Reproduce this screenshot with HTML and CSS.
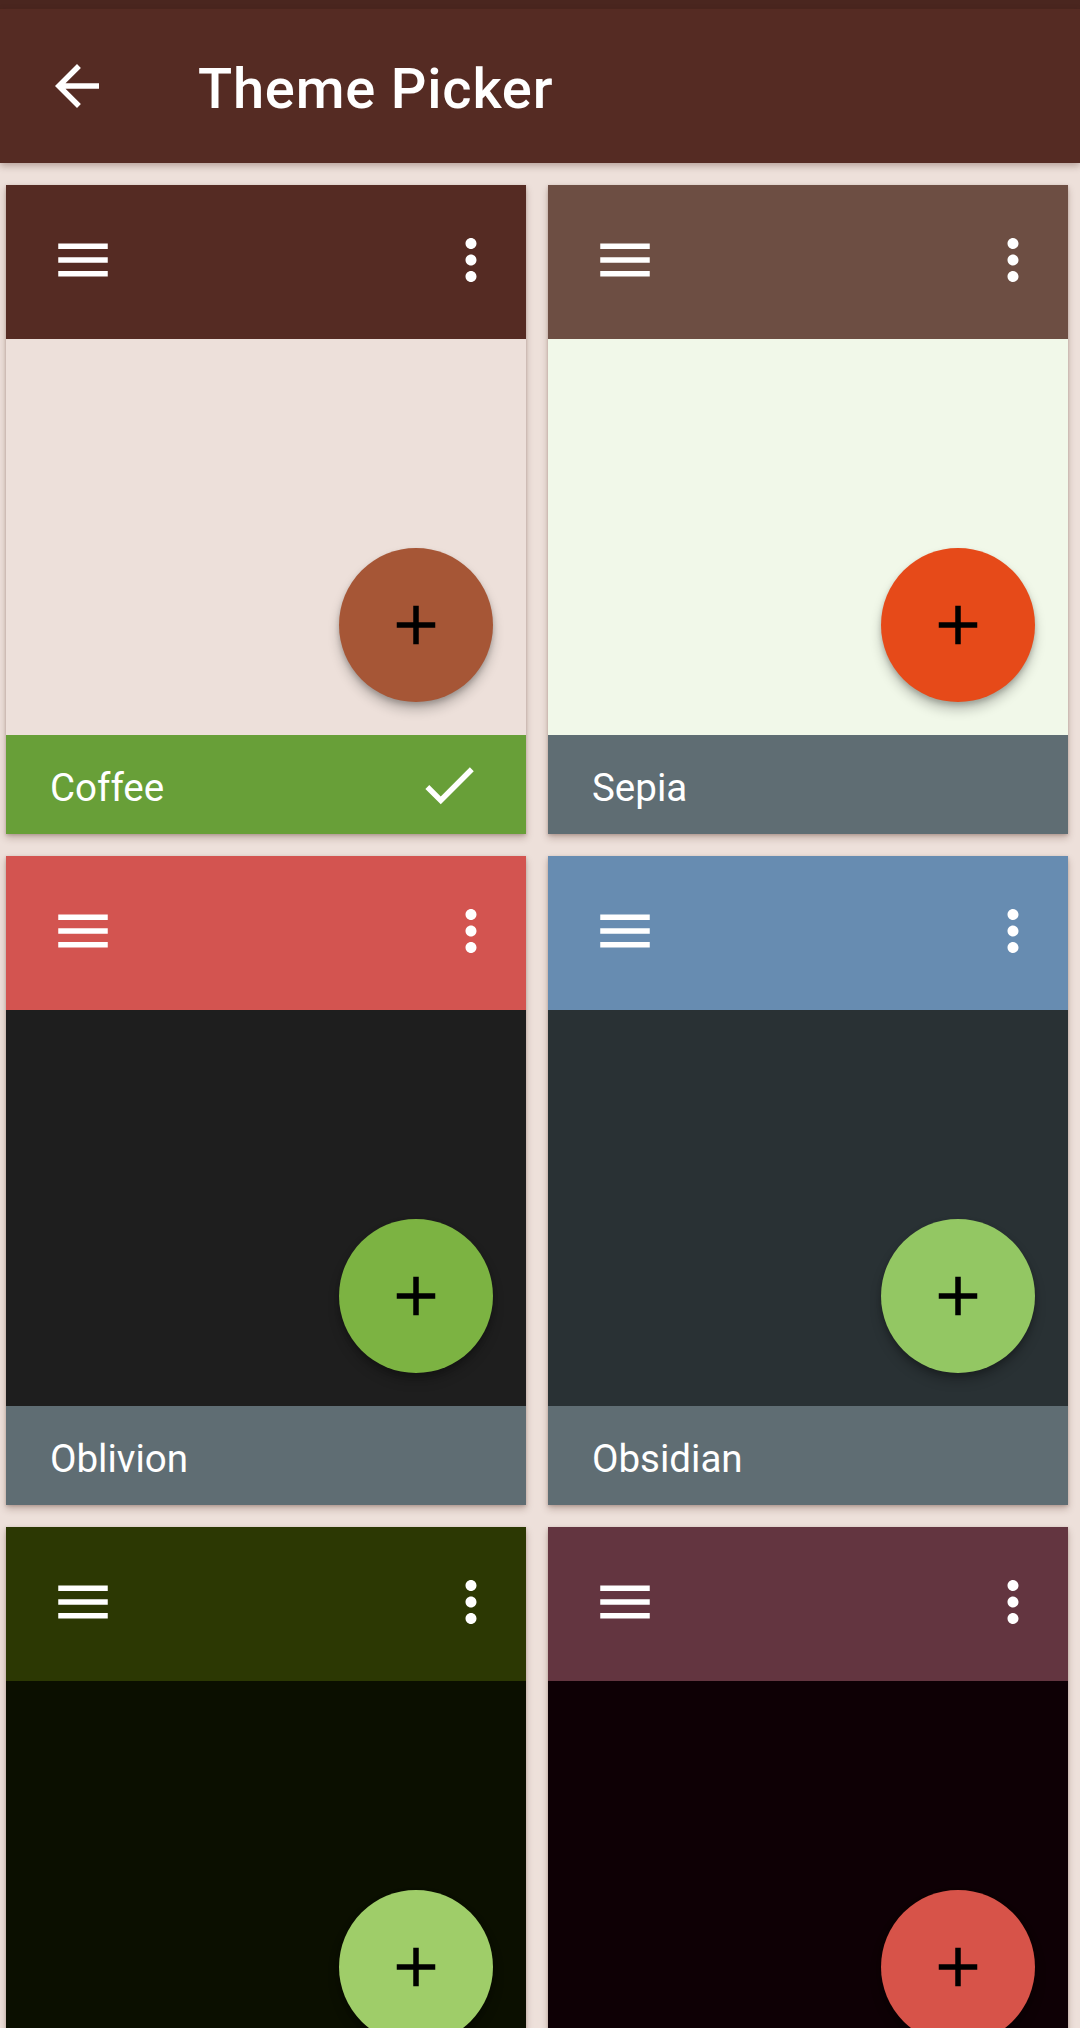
FILE: index.html
```html
<!DOCTYPE html>
<html lang="en">
<head>
<meta charset="utf-8">
<title>Theme Picker</title>
<link rel="stylesheet" href="styles.css">
</head>
<body>
<div class="statusbar"></div>
<header class="appbar">
  <svg class="back" viewBox="0 0 24 24"><path d="M20 11H7.83l5.59-5.59L12 4l-8 8 8 8 1.41-1.41L7.83 13H20v-2z"/></svg>
  <h1 class="title">Theme Picker</h1>
</header>
<main class="grid">
  <div class="card t-coffee">
    <div class="bar"><svg class="ico" viewBox="0 0 24 24"><path d="M3 18h18v-2H3v2zm0-5h18v-2H3v2zm0-7v2h18V6H3z"/></svg><svg class="ico more" viewBox="0 0 24 24"><path d="M12 8c1.1 0 2-.9 2-2s-.9-2-2-2-2 .9-2 2 .9 2 2 2zm0 2c-1.1 0-2 .9-2 2s.9 2 2 2 2-.9 2-2-.9-2-2-2zm0 6c-1.1 0-2 .9-2 2s.9 2 2 2 2-.9 2-2-.9-2-2-2z"/></svg></div>
    <div class="content"><div class="fab"><svg viewBox="0 0 24 24"><path d="M19 13h-6v6h-2v-6H5v-2h6V5h2v6h6v2z"/></svg></div></div>
    <div class="label selected"><span>Coffee</span><svg class="ico" viewBox="0 0 24 24"><path d="M9 16.17L4.83 12l-1.42 1.41L9 19 21 7l-1.41-1.41z"/></svg></div>
  </div>
  <div class="card t-sepia">
    <div class="bar"><svg class="ico" viewBox="0 0 24 24"><path d="M3 18h18v-2H3v2zm0-5h18v-2H3v2zm0-7v2h18V6H3z"/></svg><svg class="ico more" viewBox="0 0 24 24"><path d="M12 8c1.1 0 2-.9 2-2s-.9-2-2-2-2 .9-2 2 .9 2 2 2zm0 2c-1.1 0-2 .9-2 2s.9 2 2 2 2-.9 2-2-.9-2-2-2zm0 6c-1.1 0-2 .9-2 2s.9 2 2 2 2-.9 2-2-.9-2-2-2z"/></svg></div>
    <div class="content"><div class="fab"><svg viewBox="0 0 24 24"><path d="M19 13h-6v6h-2v-6H5v-2h6V5h2v6h6v2z"/></svg></div></div>
    <div class="label"><span>Sepia</span></div>
  </div>
  <div class="card t-oblivion">
    <div class="bar"><svg class="ico" viewBox="0 0 24 24"><path d="M3 18h18v-2H3v2zm0-5h18v-2H3v2zm0-7v2h18V6H3z"/></svg><svg class="ico more" viewBox="0 0 24 24"><path d="M12 8c1.1 0 2-.9 2-2s-.9-2-2-2-2 .9-2 2 .9 2 2 2zm0 2c-1.1 0-2 .9-2 2s.9 2 2 2 2-.9 2-2-.9-2-2-2zm0 6c-1.1 0-2 .9-2 2s.9 2 2 2 2-.9 2-2-.9-2-2-2z"/></svg></div>
    <div class="content"><div class="fab"><svg viewBox="0 0 24 24"><path d="M19 13h-6v6h-2v-6H5v-2h6V5h2v6h6v2z"/></svg></div></div>
    <div class="label"><span>Oblivion</span></div>
  </div>
  <div class="card t-obsidian">
    <div class="bar"><svg class="ico" viewBox="0 0 24 24"><path d="M3 18h18v-2H3v2zm0-5h18v-2H3v2zm0-7v2h18V6H3z"/></svg><svg class="ico more" viewBox="0 0 24 24"><path d="M12 8c1.1 0 2-.9 2-2s-.9-2-2-2-2 .9-2 2 .9 2 2 2zm0 2c-1.1 0-2 .9-2 2s.9 2 2 2 2-.9 2-2-.9-2-2-2zm0 6c-1.1 0-2 .9-2 2s.9 2 2 2 2-.9 2-2-.9-2-2-2z"/></svg></div>
    <div class="content"><div class="fab"><svg viewBox="0 0 24 24"><path d="M19 13h-6v6h-2v-6H5v-2h6V5h2v6h6v2z"/></svg></div></div>
    <div class="label"><span>Obsidian</span></div>
  </div>
  <div class="card t-olive">
    <div class="bar"><svg class="ico" viewBox="0 0 24 24"><path d="M3 18h18v-2H3v2zm0-5h18v-2H3v2zm0-7v2h18V6H3z"/></svg><svg class="ico more" viewBox="0 0 24 24"><path d="M12 8c1.1 0 2-.9 2-2s-.9-2-2-2-2 .9-2 2 .9 2 2 2zm0 2c-1.1 0-2 .9-2 2s.9 2 2 2 2-.9 2-2-.9-2-2-2zm0 6c-1.1 0-2 .9-2 2s.9 2 2 2 2-.9 2-2-.9-2-2-2z"/></svg></div>
    <div class="content"><div class="fab"><svg viewBox="0 0 24 24"><path d="M19 13h-6v6h-2v-6H5v-2h6V5h2v6h6v2z"/></svg></div></div>
    <div class="label"></div>
  </div>
  <div class="card t-wine">
    <div class="bar"><svg class="ico" viewBox="0 0 24 24"><path d="M3 18h18v-2H3v2zm0-5h18v-2H3v2zm0-7v2h18V6H3z"/></svg><svg class="ico more" viewBox="0 0 24 24"><path d="M12 8c1.1 0 2-.9 2-2s-.9-2-2-2-2 .9-2 2 .9 2 2 2zm0 2c-1.1 0-2 .9-2 2s.9 2 2 2 2-.9 2-2-.9-2-2-2zm0 6c-1.1 0-2 .9-2 2s.9 2 2 2 2-.9 2-2-.9-2-2-2z"/></svg></div>
    <div class="content"><div class="fab"><svg viewBox="0 0 24 24"><path d="M19 13h-6v6h-2v-6H5v-2h6V5h2v6h6v2z"/></svg></div></div>
    <div class="label"></div>
  </div>
</main>
</body>
</html>
```

FILE: styles.css
```css
html, body {
  margin: 0;
  padding: 0;
}
body {
  background: #ede0da;
  font-family: Roboto, "Noto Sans", sans-serif;
  width: 1080px;
  height: 2028px;
  overflow: hidden;
}
.statusbar {
  height: 9px;
  background: #4a261f;
}
.appbar {
  height: 154px;
  background: #552b23;
  display: flex;
  align-items: center;
  padding-left: 44px;
  box-shadow: 0 3px 7px rgba(60, 20, 10, 0.3);
  position: relative;
  z-index: 2;
}
.back {
  width: 66px;
  height: 66px;
  fill: #fff;
  flex: none;
}
.title {
  margin: 5px 0 0 88px;
  color: #fff;
  font-size: 56px;
  font-weight: 500;
  letter-spacing: 0.8px;
}
.grid {
  display: grid;
  grid-template-columns: 520px 520px;
  column-gap: 22px;
  row-gap: 22px;
  padding: 22px 12px 0 6px;
}
.card {
  display: flex;
  flex-direction: column;
  box-shadow: 0 4px 7px rgba(70, 30, 20, 0.26), 0 1px 3px rgba(70, 30, 20, 0.2);
}
.bar {
  height: 154px;
  display: flex;
  align-items: center;
  justify-content: space-between;
  padding: 0 22px 4px 44px;
  box-sizing: border-box;
}
.ico {
  width: 66px;
  height: 66px;
  fill: #fff;
  flex: none;
}
.content {
  height: 396px;
  position: relative;
}
.fab {
  position: absolute;
  right: 33px;
  bottom: 33px;
  width: 154px;
  height: 154px;
  border-radius: 50%;
  display: flex;
  align-items: center;
  justify-content: center;
  box-shadow: 0 8px 12px rgba(0, 0, 0, 0.22), 0 3px 5px rgba(0, 0, 0, 0.18);
}
.fab svg {
  width: 66px;
  height: 66px;
  fill: #000;
}
.label {
  height: 99px;
  background: #5f6d73;
  display: flex;
  align-items: center;
  justify-content: space-between;
  padding: 0 44px 0 44px;
  box-sizing: border-box;
  color: #fff;
  font-size: 38.5px;
}
.label span {
  padding-top: 5px;
}
.label.selected {
  background: #689f38;
}
.t-coffee .bar { background: #552b23; }
.t-coffee .content { background: #ede0da; }
.t-coffee .fab { background: #a65636; }

.t-sepia .bar { background: #6d4e43; }
.t-sepia .content { background: #f1f8e9; }
.t-sepia .fab { background: #e64a19; }

.t-oblivion .bar { background: #d35450; }
.t-oblivion .content { background: #1e1e1e; }
.t-oblivion .fab { background: #7cb342; }

.t-obsidian .bar { background: #678cb1; }
.t-obsidian .content { background: #293134; }
.t-obsidian .fab { background: #93c763; }

.t-olive .bar { background: #2c3803; }
.t-olive .content { background: #0b0f00; }
.t-olive .fab { background: #9fcd69; }

.t-wine .bar { background: #633540; }
.t-wine .content { background: #0e0005; }
.t-wine .fab { background: #d75349; }
```
